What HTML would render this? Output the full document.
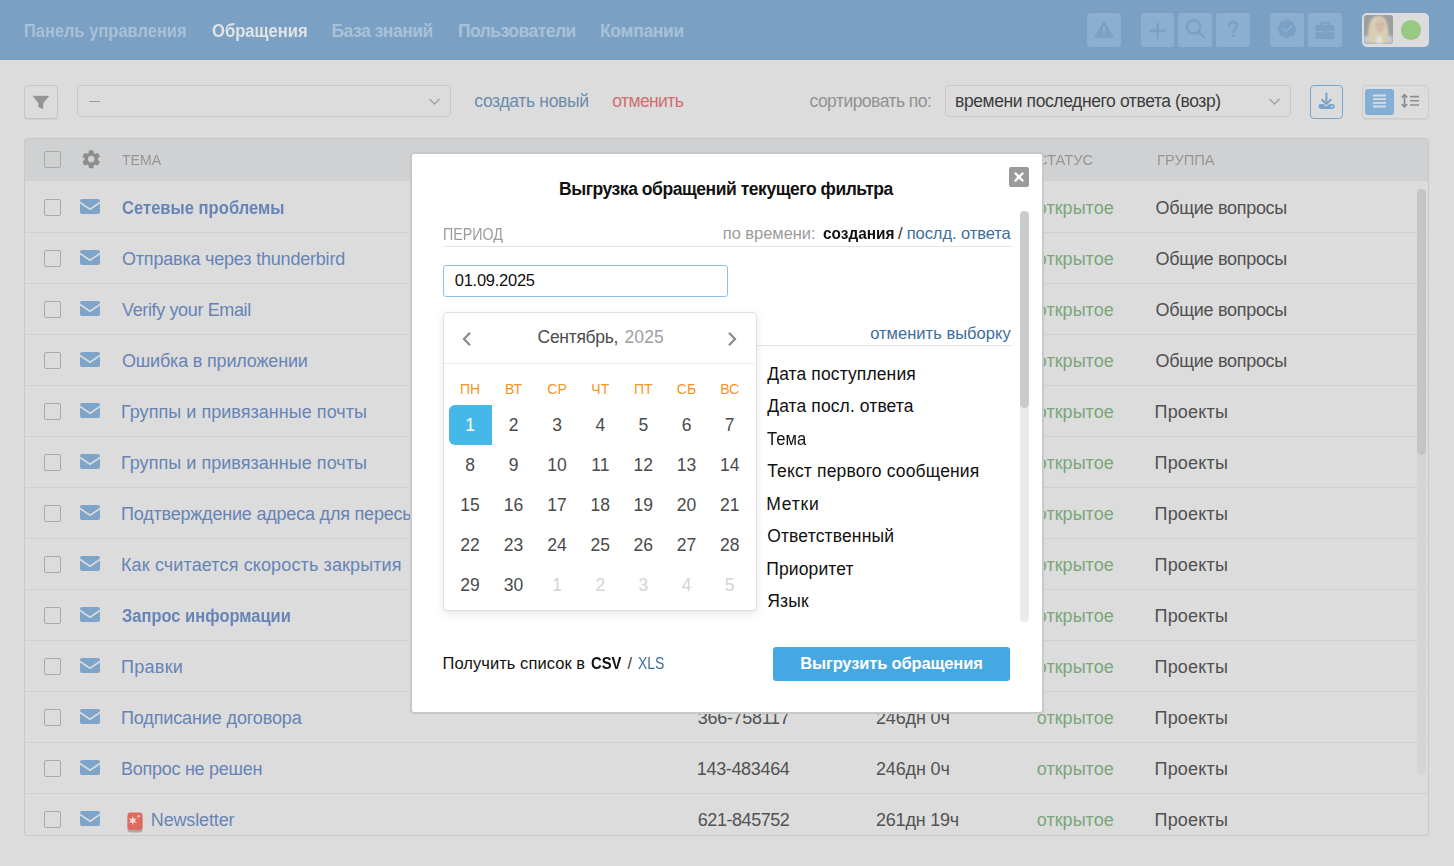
<!DOCTYPE html>
<html><head><meta charset="utf-8">
<style>
*{box-sizing:border-box;margin:0;padding:0}
html,body{width:1454px;height:866px;overflow:hidden;background:#dcdcdc;font-family:"Liberation Sans",sans-serif;position:relative}
.t{position:absolute;white-space:nowrap}
</style></head><body>
<div style="position:absolute;left:0;top:0;width:1454px;height:60px;background:#7aa1c4"></div>
<div class="t" style="left:24.06px;top:20.00px;transform:scaleX(0.9411);transform-origin:0 0;font-size:17.5px;line-height:22px;color:#a8c1d8;font-weight:700;">Панель управления</div>
<div class="t" style="left:211.50px;top:20.00px;transform:scaleX(0.9481);transform-origin:0 0;font-size:17.5px;line-height:22px;color:#e2e4e6;font-weight:700;">Обращения</div>
<div class="t" style="left:331.50px;top:20.00px;font-size:17.5px;line-height:22px;color:#a8c1d8;font-weight:700;letter-spacing:-0.492px;">База знаний</div>
<div class="t" style="left:458.00px;top:20.00px;font-size:17.5px;line-height:22px;color:#a8c1d8;font-weight:700;letter-spacing:-0.531px;">Пользователи</div>
<div class="t" style="left:600.00px;top:20.00px;font-size:17.5px;line-height:22px;color:#a8c1d8;font-weight:700;letter-spacing:-0.317px;">Компании</div>
<div style="position:absolute;top:13px;width:34px;height:34px;background:#8cafd0;border-radius:3px;left:1087px"><svg width="34" height="34" viewBox="0 0 34 34"><path d="M17 9.8 L25.2 23.8 L8.8 23.8 Z" fill="#7aa1c4" stroke="#7aa1c4" stroke-width="2.4" stroke-linejoin="round"/><rect x="16" y="13.2" width="2" height="5.8" rx="1" fill="#8cafd0"/><circle cx="17" cy="21.3" r="1.15" fill="#8cafd0"/></svg></div>
<div style="position:absolute;top:13px;width:34px;height:34px;background:#8cafd0;border-radius:3px;left:1141px;width:33px"><svg width="33" height="34" viewBox="0 0 33 34"><path d="M16.6 10.6 V25 M9.3 17.8 H24" stroke="#7aa1c4" stroke-width="2.4" stroke-linecap="round"/></svg></div>
<div style="position:absolute;top:13px;width:34px;height:34px;background:#8cafd0;border-radius:3px;left:1178px"><svg width="34" height="34" viewBox="0 0 34 34"><circle cx="15.6" cy="14" r="6.6" fill="none" stroke="#7aa1c4" stroke-width="2.6"/><path d="M20.5 19 L26 24.2" stroke="#7aa1c4" stroke-width="2.6" stroke-linecap="round"/></svg></div>
<div style="position:absolute;top:13px;width:34px;height:34px;background:#8cafd0;border-radius:3px;left:1216px"><svg width="34" height="34" viewBox="0 0 34 34"><path d="M12.9 12.8 C12.9 10.2 14.9 8.9 17 8.9 C19.2 8.9 21.1 10.3 21.1 12.5 C21.1 15.3 17.6 15.6 17.4 19" fill="none" stroke="#7aa1c4" stroke-width="2.6" stroke-linecap="round"/><circle cx="17.4" cy="23" r="1.5" fill="#7aa1c4"/></svg></div>
<div style="position:absolute;top:13px;width:34px;height:34px;background:#8cafd0;border-radius:3px;left:1270px"><svg width="34" height="34" viewBox="0 0 34 34"><path d="M26.45 15.80 L26.36 16.42 L26.10 17.01 L25.73 17.56 L25.33 18.06 L24.97 18.54 L24.71 19.03 L24.54 19.57 L24.46 20.16 L24.38 20.80 L24.26 21.45 L24.02 22.05 L23.65 22.55 L23.15 22.92 L22.55 23.16 L21.90 23.28 L21.26 23.36 L20.67 23.44 L20.13 23.61 L19.64 23.87 L19.16 24.23 L18.66 24.63 L18.11 25.00 L17.52 25.26 L16.90 25.35 L16.28 25.26 L15.69 25.00 L15.14 24.63 L14.64 24.23 L14.16 23.87 L13.67 23.61 L13.13 23.44 L12.54 23.36 L11.90 23.28 L11.25 23.16 L10.65 22.92 L10.15 22.55 L9.78 22.05 L9.54 21.45 L9.42 20.80 L9.34 20.16 L9.26 19.57 L9.09 19.03 L8.83 18.54 L8.47 18.06 L8.07 17.56 L7.70 17.01 L7.44 16.42 L7.35 15.80 L7.44 15.18 L7.70 14.59 L8.07 14.04 L8.47 13.54 L8.83 13.06 L9.09 12.57 L9.26 12.03 L9.34 11.44 L9.42 10.80 L9.54 10.15 L9.78 9.55 L10.15 9.05 L10.65 8.68 L11.25 8.44 L11.90 8.32 L12.54 8.24 L13.13 8.16 L13.67 7.99 L14.16 7.73 L14.64 7.37 L15.14 6.97 L15.69 6.60 L16.28 6.34 L16.90 6.25 L17.52 6.34 L18.11 6.60 L18.66 6.97 L19.16 7.37 L19.64 7.73 L20.13 7.99 L20.67 8.16 L21.26 8.24 L21.90 8.32 L22.55 8.44 L23.15 8.68 L23.65 9.05 L24.02 9.55 L24.26 10.15 L24.38 10.80 L24.46 11.44 L24.54 12.03 L24.71 12.57 L24.97 13.06 L25.33 13.54 L25.73 14.04 L26.10 14.59 L26.36 15.18 Z" fill="#7aa1c4"/><path d="M12.9 15.8 L16 18.7 L21.4 13.3" fill="none" stroke="#8cafd0" stroke-width="1.7" stroke-linecap="round" stroke-linejoin="round"/></svg></div>
<div style="position:absolute;top:13px;width:34px;height:34px;background:#8cafd0;border-radius:3px;left:1308px"><svg width="34" height="34" viewBox="0 0 34 34"><path d="M13.3 12 V10.6 Q13.3 9.7 14.2 9.7 H19.8 Q20.7 9.7 20.7 10.6 V12" fill="none" stroke="#7aa1c4" stroke-width="2"/><rect x="7.3" y="11.9" width="19.1" height="14.1" rx="1.8" fill="#7aa1c4"/><path d="M7.3 18.5 H26.4" stroke="#8cafd0" stroke-width="1.2"/><rect x="14.6" y="17.6" width="4.4" height="2.2" fill="#7aa1c4"/><rect x="14.9" y="19.6" width="3.8" height="1.2" fill="#84a9cb"/></svg></div>
<div style="position:absolute;top:13px;width:34px;height:34px;background:#8cafd0;border-radius:3px;left:1362px;width:67px;background:#dcdcdc;border-radius:5px">
 <div style="position:absolute;left:2.2px;top:2px;width:28.6px;height:28.6px;border-radius:3px;overflow:hidden;background:#9d9e9f">
 <svg width="28.6" height="28.6" viewBox="0 0 29 29"><defs><filter id="bl" x="-20%" y="-20%" width="140%" height="140%"><feGaussianBlur stdDeviation="0.9"/></filter></defs><g filter="url(#bl)">
 <path d="M0 22 Q6 19 14 20 Q23 19 29 22 V29 H0 Z" fill="#c4ccd4"/>
 <path d="M7 29 C3 22 4 14 6 8 C8 2 12 1 15 1 C19 1 22 3 23 8 C25 14 26 22 23 29 Z" fill="#d9cdb2"/>
 <ellipse cx="16" cy="10.5" rx="5" ry="7" fill="#d8bfb0"/>
 <path d="M12 29 L14 21 L17 21 L19 29 Z" fill="#e4e4e2"/>
 <path d="M10 6 Q16 1 22 6 Q19 4 16 4 Q12 4 10 9 Z" fill="#e2d6bc"/>
 <circle cx="14" cy="9.5" r="0.8" fill="#8f8278"/><circle cx="18.8" cy="9.5" r="0.8" fill="#8f8278"/><path d="M14.3 14.2 Q16.5 15.6 18.4 14.2" stroke="#c58f86" stroke-width="0.9" fill="none"/>
 </g></svg>
 </div>
 <div style="position:absolute;left:39px;top:7px;width:19.5px;height:19.5px;border-radius:50%;background:#98c884"></div>
</div>
<div style="position:absolute;border:1px solid #c6c6c6;border-radius:4px;left:24px;top:85px;width:34px;height:34px;box-shadow:0 1px 1px rgba(0,0,0,0.06)"><svg width="32" height="32" viewBox="0 0 32 32" style="position:absolute;left:0;top:0"><path d="M8.1 10 H23.9 L18 17.4 V22.9 L13.6 20.9 V17.4 Z" fill="#959595" stroke="#959595" stroke-width="0.4" stroke-linejoin="round"/></svg></div>
<div style="position:absolute;border:1px solid #c6c6c6;border-radius:4px;left:77px;top:85px;width:374px;height:32px;border-color:#c9c9c9"><div style="position:absolute;left:11px;top:14.5px;width:11px;height:1.5px;background:#9c9c9c"></div><svg width="14" height="10" viewBox="0 0 14 10" style="position:absolute;left:350px;top:11px"><path d="M1.5 2 L6.5 7 L11.5 2" fill="none" stroke="#a4a4a4" stroke-width="1.5"/></svg></div>
<div class="t" style="left:474.30px;top:90.00px;font-size:17.5px;line-height:22px;color:#6b8cab;letter-spacing:-0.329px;">создать новый</div>
<div class="t" style="left:612.30px;top:90.00px;font-size:17.5px;line-height:22px;color:#cf6f6f;letter-spacing:-0.597px;">отменить</div>
<div class="t" style="left:809.50px;top:90.00px;font-size:17.5px;line-height:22px;color:#929292;letter-spacing:-0.531px;">сортировать по:</div>
<div style="position:absolute;border:1px solid #c6c6c6;border-radius:4px;left:945px;top:85px;width:346px;height:32px;border-color:#c9c9c9"><svg width="14" height="10" viewBox="0 0 14 10" style="position:absolute;left:322px;top:11px"><path d="M1.5 2 L6.5 7 L11.5 2" fill="none" stroke="#a4a4a4" stroke-width="1.5"/></svg></div>
<div class="t" style="left:955.00px;top:90.00px;font-size:17.5px;line-height:22px;color:#3c3c3c;letter-spacing:-0.403px;">времени последнего ответа (возр)</div>
<div style="position:absolute;border:1px solid #c6c6c6;border-radius:4px;left:1310px;top:85px;width:33px;height:34px;border-color:#7aa7cd"><svg width="31" height="32" viewBox="0 0 31 32" style="position:absolute;left:0;top:0"><path d="M15.4 7.6 V17.2" stroke="#76a4cb" stroke-width="2" stroke-linecap="round"/><path d="M11.1 13.8 L15.4 18.1 L19.7 13.8" fill="none" stroke="#76a4cb" stroke-width="2" stroke-linecap="round" stroke-linejoin="round"/><path d="M9.9 18.1 H12.4 L15.4 20.6 L18.4 18.1 H21.4 Q23.8 18.1 23.8 20.5 Q23.8 22.9 21.4 22.9 H9.9 Q7.5 22.9 7.5 20.5 Q7.5 18.1 9.9 18.1 Z" fill="#76a4cb"/><circle cx="20.9" cy="20.5" r="0.9" fill="#dcdcdc"/></svg></div>
<div style="position:absolute;border:1px solid #c6c6c6;border-radius:4px;left:1362px;top:85px;width:67px;height:33.5px;border-color:#cdcdcd;box-shadow:0 1px 1px rgba(0,0,0,0.05)">
  <div style="position:absolute;left:2px;top:3px;width:29px;height:26px;background:#82afd3;border-radius:3px"></div>
  <svg width="29" height="26" viewBox="0 0 29 26" style="position:absolute;left:2px;top:3px"><path d="M8 6.5 H21 M8 10.2 H21 M8 13.8 H21 M8 17.5 H21" stroke="#dadde0" stroke-width="1.8"/></svg>
  <svg width="30" height="30" viewBox="0 0 30 30" style="position:absolute;left:33px;top:1px"><path d="M14 9.6 H23 M14 13.8 H23 M14 18 H23" stroke="#8e8e8e" stroke-width="1.6"/><path d="M8.5 7.8 V19.8 M6.3 10 L8.5 7.6 L10.7 10 M6.3 17.6 L8.5 20 L10.7 17.6" fill="none" stroke="#8e8e8e" stroke-width="1.7" stroke-linecap="round" stroke-linejoin="round"/></svg>
</div>
<div style="position:absolute;left:24px;top:138px;width:1405px;height:698px;border:1px solid #c9c9c9;border-radius:3px;overflow:hidden;background:#dcdcdc"><div style="position:absolute;left:0;top:0;width:1403px;height:42px;background:#d0d1d3"></div></div>
<div style="position:absolute;left:44px;width:17px;height:17px;border:1.5px solid #a9a9a9;border-radius:2px;top:151px"></div>
<svg width="22.4" height="22.4" viewBox="0 0 24 24" style="position:absolute;left:80.2px;top:147.7px"><path fill="#8d8d8d" d="M19.14 12.94c.04-.3.06-.61.06-.94 0-.32-.02-.64-.07-.94l2.03-1.58a.49.49 0 0 0 .12-.61l-1.92-3.32a.488.488 0 0 0-.59-.22l-2.39.96c-.5-.38-1.03-.7-1.62-.94l-.36-2.54a.484.484 0 0 0-.48-.41h-3.840c-.24 0-.43.17-.47.41l-.36 2.54c-.59.24-1.13.57-1.62.94l-2.39-.96c-.22-.08-.47 0-.59.22L2.74 8.87c-.12.21-.08.47.12.61l2.03 1.58c-.05.3-.09.63-.09.94s.02.64.07.94l-2.03 1.58a.49.49 0 0 0-.12.61l1.92 3.32c.12.22.37.29.59.22l2.39-.96c.5.38 1.03.7 1.62.94l.36 2.54c.05.24.24.41.48.41h3.84c.24 0 .44-.17.47-.41l.36-2.54c.59-.24 1.13-.56 1.62-.94l2.39.96c.22.08.47 0 .59-.22l1.92-3.32c.12-.22.07-.47-.12-.61l-2.01-1.58zM12 15.6c-1.98 0-3.6-1.620-3.6-3.6s1.62-3.6 3.6-3.6 3.6 1.62 3.6 3.6-1.62 3.6-3.6 3.6z"/></svg>
<div class="t" style="left:121.80px;top:150.00px;transform:scaleX(0.9058);transform-origin:0 0;font-size:15.5px;line-height:19px;color:#969696;">ТЕМА</div>
<div class="t" style="left:1037.00px;top:150.00px;transform:scaleX(0.9480);transform-origin:0 0;font-size:15.5px;line-height:19px;color:#969696;">СТАТУС</div>
<div class="t" style="left:1157.05px;top:150.00px;transform:scaleX(0.9468);transform-origin:0 0;font-size:15.5px;line-height:19px;color:#969696;">ГРУППА</div>
<div style="position:absolute;left:25px;top:232px;width:1403px;height:1px;background:#d0d0d0"></div>
<div style="position:absolute;left:44px;width:17px;height:17px;border:1.5px solid #a9a9a9;border-radius:2px;top:199px"></div>
<div style="position:absolute;left:80px;top:199px;width:20px;height:15px"><svg width="20" height="15" viewBox="0 0 20 15"><path d="M2 0 H18 Q20 0 20 2 V2.6 L10 9.3 L0 2.6 V2 Q0 0 2 0 Z" fill="#7ea5c9"/><path d="M0 4.6 L10 11.3 L20 4.6 V13 Q20 15 18 15 H2 Q0 15 0 13 Z" fill="#7ea5c9"/></svg></div>
<div class="t" style="left:122.00px;top:197.00px;transform:scaleX(0.9223);transform-origin:0 0;font-size:18px;line-height:22px;color:#6684b6;font-weight:700;">Сетевые проблемы</div>
<div class="t" style="left:1036.80px;top:197.00px;font-size:18px;line-height:22px;color:#7aa67a;letter-spacing:0.024px;">открытое</div>
<div class="t" style="left:1155.50px;top:197.00px;font-size:18px;line-height:22px;color:#505050;letter-spacing:-0.294px;">Общие вопросы</div>
<div style="position:absolute;left:25px;top:283px;width:1403px;height:1px;background:#d0d0d0"></div>
<div style="position:absolute;left:44px;width:17px;height:17px;border:1.5px solid #a9a9a9;border-radius:2px;top:250px"></div>
<div style="position:absolute;left:80px;top:250px;width:20px;height:15px"><svg width="20" height="15" viewBox="0 0 20 15"><path d="M2 0 H18 Q20 0 20 2 V2.6 L10 9.3 L0 2.6 V2 Q0 0 2 0 Z" fill="#7ea5c9"/><path d="M0 4.6 L10 11.3 L20 4.6 V13 Q20 15 18 15 H2 Q0 15 0 13 Z" fill="#7ea5c9"/></svg></div>
<div class="t" style="left:122.00px;top:248.00px;font-size:18px;line-height:22px;color:#6684b6;letter-spacing:-0.199px;">Отправка через thunderbird</div>
<div class="t" style="left:1036.80px;top:248.00px;font-size:18px;line-height:22px;color:#7aa67a;letter-spacing:0.024px;">открытое</div>
<div class="t" style="left:1155.50px;top:248.00px;font-size:18px;line-height:22px;color:#505050;letter-spacing:-0.294px;">Общие вопросы</div>
<div style="position:absolute;left:25px;top:334px;width:1403px;height:1px;background:#d0d0d0"></div>
<div style="position:absolute;left:44px;width:17px;height:17px;border:1.5px solid #a9a9a9;border-radius:2px;top:301px"></div>
<div style="position:absolute;left:80px;top:301px;width:20px;height:15px"><svg width="20" height="15" viewBox="0 0 20 15"><path d="M2 0 H18 Q20 0 20 2 V2.6 L10 9.3 L0 2.6 V2 Q0 0 2 0 Z" fill="#7ea5c9"/><path d="M0 4.6 L10 11.3 L20 4.6 V13 Q20 15 18 15 H2 Q0 15 0 13 Z" fill="#7ea5c9"/></svg></div>
<div class="t" style="left:122.00px;top:299.00px;font-size:18px;line-height:22px;color:#6684b6;letter-spacing:-0.365px;">Verify your Email</div>
<div class="t" style="left:1036.80px;top:299.00px;font-size:18px;line-height:22px;color:#7aa67a;letter-spacing:0.024px;">открытое</div>
<div class="t" style="left:1155.50px;top:299.00px;font-size:18px;line-height:22px;color:#505050;letter-spacing:-0.294px;">Общие вопросы</div>
<div style="position:absolute;left:25px;top:385px;width:1403px;height:1px;background:#d0d0d0"></div>
<div style="position:absolute;left:44px;width:17px;height:17px;border:1.5px solid #a9a9a9;border-radius:2px;top:352px"></div>
<div style="position:absolute;left:80px;top:352px;width:20px;height:15px"><svg width="20" height="15" viewBox="0 0 20 15"><path d="M2 0 H18 Q20 0 20 2 V2.6 L10 9.3 L0 2.6 V2 Q0 0 2 0 Z" fill="#7ea5c9"/><path d="M0 4.6 L10 11.3 L20 4.6 V13 Q20 15 18 15 H2 Q0 15 0 13 Z" fill="#7ea5c9"/></svg></div>
<div class="t" style="left:122.00px;top:350.00px;font-size:18px;line-height:22px;color:#6684b6;letter-spacing:-0.179px;">Ошибка в приложении</div>
<div class="t" style="left:1036.80px;top:350.00px;font-size:18px;line-height:22px;color:#7aa67a;letter-spacing:0.024px;">открытое</div>
<div class="t" style="left:1155.50px;top:350.00px;font-size:18px;line-height:22px;color:#505050;letter-spacing:-0.294px;">Общие вопросы</div>
<div style="position:absolute;left:25px;top:436px;width:1403px;height:1px;background:#d0d0d0"></div>
<div style="position:absolute;left:44px;width:17px;height:17px;border:1.5px solid #a9a9a9;border-radius:2px;top:403px"></div>
<div style="position:absolute;left:80px;top:403px;width:20px;height:15px"><svg width="20" height="15" viewBox="0 0 20 15"><path d="M2 0 H18 Q20 0 20 2 V2.6 L10 9.3 L0 2.6 V2 Q0 0 2 0 Z" fill="#7ea5c9"/><path d="M0 4.6 L10 11.3 L20 4.6 V13 Q20 15 18 15 H2 Q0 15 0 13 Z" fill="#7ea5c9"/></svg></div>
<div class="t" style="left:121.00px;top:401.00px;font-size:18px;line-height:22px;color:#6684b6;letter-spacing:0.039px;">Группы и привязанные почты</div>
<div class="t" style="left:1036.80px;top:401.00px;font-size:18px;line-height:22px;color:#7aa67a;letter-spacing:0.024px;">открытое</div>
<div class="t" style="left:1154.50px;top:401.00px;font-size:18px;line-height:22px;color:#505050;letter-spacing:0.201px;">Проекты</div>
<div style="position:absolute;left:25px;top:487px;width:1403px;height:1px;background:#d0d0d0"></div>
<div style="position:absolute;left:44px;width:17px;height:17px;border:1.5px solid #a9a9a9;border-radius:2px;top:454px"></div>
<div style="position:absolute;left:80px;top:454px;width:20px;height:15px"><svg width="20" height="15" viewBox="0 0 20 15"><path d="M2 0 H18 Q20 0 20 2 V2.6 L10 9.3 L0 2.6 V2 Q0 0 2 0 Z" fill="#7ea5c9"/><path d="M0 4.6 L10 11.3 L20 4.6 V13 Q20 15 18 15 H2 Q0 15 0 13 Z" fill="#7ea5c9"/></svg></div>
<div class="t" style="left:121.00px;top:452.00px;font-size:18px;line-height:22px;color:#6684b6;letter-spacing:0.039px;">Группы и привязанные почты</div>
<div class="t" style="left:1036.80px;top:452.00px;font-size:18px;line-height:22px;color:#7aa67a;letter-spacing:0.024px;">открытое</div>
<div class="t" style="left:1154.50px;top:452.00px;font-size:18px;line-height:22px;color:#505050;letter-spacing:0.201px;">Проекты</div>
<div style="position:absolute;left:25px;top:538px;width:1403px;height:1px;background:#d0d0d0"></div>
<div style="position:absolute;left:44px;width:17px;height:17px;border:1.5px solid #a9a9a9;border-radius:2px;top:505px"></div>
<div style="position:absolute;left:80px;top:505px;width:20px;height:15px"><svg width="20" height="15" viewBox="0 0 20 15"><path d="M2 0 H18 Q20 0 20 2 V2.6 L10 9.3 L0 2.6 V2 Q0 0 2 0 Z" fill="#7ea5c9"/><path d="M0 4.6 L10 11.3 L20 4.6 V13 Q20 15 18 15 H2 Q0 15 0 13 Z" fill="#7ea5c9"/></svg></div>
<div class="t" style="left:121.00px;top:503.00px;font-size:18px;line-height:22px;color:#6684b6;letter-spacing:-0.200px;">Подтверждение адреса для пересылки</div>
<div class="t" style="left:1036.80px;top:503.00px;font-size:18px;line-height:22px;color:#7aa67a;letter-spacing:0.024px;">открытое</div>
<div class="t" style="left:1154.50px;top:503.00px;font-size:18px;line-height:22px;color:#505050;letter-spacing:0.201px;">Проекты</div>
<div style="position:absolute;left:25px;top:589px;width:1403px;height:1px;background:#d0d0d0"></div>
<div style="position:absolute;left:44px;width:17px;height:17px;border:1.5px solid #a9a9a9;border-radius:2px;top:556px"></div>
<div style="position:absolute;left:80px;top:556px;width:20px;height:15px"><svg width="20" height="15" viewBox="0 0 20 15"><path d="M2 0 H18 Q20 0 20 2 V2.6 L10 9.3 L0 2.6 V2 Q0 0 2 0 Z" fill="#7ea5c9"/><path d="M0 4.6 L10 11.3 L20 4.6 V13 Q20 15 18 15 H2 Q0 15 0 13 Z" fill="#7ea5c9"/></svg></div>
<div class="t" style="left:121.00px;top:554.00px;font-size:18px;line-height:22px;color:#6684b6;letter-spacing:0.127px;">Как считается скорость закрытия</div>
<div class="t" style="left:1036.80px;top:554.00px;font-size:18px;line-height:22px;color:#7aa67a;letter-spacing:0.024px;">открытое</div>
<div class="t" style="left:1154.50px;top:554.00px;font-size:18px;line-height:22px;color:#505050;letter-spacing:0.201px;">Проекты</div>
<div style="position:absolute;left:25px;top:640px;width:1403px;height:1px;background:#d0d0d0"></div>
<div style="position:absolute;left:44px;width:17px;height:17px;border:1.5px solid #a9a9a9;border-radius:2px;top:607px"></div>
<div style="position:absolute;left:80px;top:607px;width:20px;height:15px"><svg width="20" height="15" viewBox="0 0 20 15"><path d="M2 0 H18 Q20 0 20 2 V2.6 L10 9.3 L0 2.6 V2 Q0 0 2 0 Z" fill="#7ea5c9"/><path d="M0 4.6 L10 11.3 L20 4.6 V13 Q20 15 18 15 H2 Q0 15 0 13 Z" fill="#7ea5c9"/></svg></div>
<div class="t" style="left:122.00px;top:605.00px;transform:scaleX(0.9158);transform-origin:0 0;font-size:18px;line-height:22px;color:#6684b6;font-weight:700;">Запрос информации</div>
<div class="t" style="left:1036.80px;top:605.00px;font-size:18px;line-height:22px;color:#7aa67a;letter-spacing:0.024px;">открытое</div>
<div class="t" style="left:1154.50px;top:605.00px;font-size:18px;line-height:22px;color:#505050;letter-spacing:0.201px;">Проекты</div>
<div style="position:absolute;left:25px;top:691px;width:1403px;height:1px;background:#d0d0d0"></div>
<div style="position:absolute;left:44px;width:17px;height:17px;border:1.5px solid #a9a9a9;border-radius:2px;top:658px"></div>
<div style="position:absolute;left:80px;top:658px;width:20px;height:15px"><svg width="20" height="15" viewBox="0 0 20 15"><path d="M2 0 H18 Q20 0 20 2 V2.6 L10 9.3 L0 2.6 V2 Q0 0 2 0 Z" fill="#7ea5c9"/><path d="M0 4.6 L10 11.3 L20 4.6 V13 Q20 15 18 15 H2 Q0 15 0 13 Z" fill="#7ea5c9"/></svg></div>
<div class="t" style="left:121.00px;top:656.00px;font-size:18px;line-height:22px;color:#6684b6;letter-spacing:0.281px;">Правки</div>
<div class="t" style="left:1036.80px;top:656.00px;font-size:18px;line-height:22px;color:#7aa67a;letter-spacing:0.024px;">открытое</div>
<div class="t" style="left:1154.50px;top:656.00px;font-size:18px;line-height:22px;color:#505050;letter-spacing:0.201px;">Проекты</div>
<div style="position:absolute;left:25px;top:742px;width:1403px;height:1px;background:#d0d0d0"></div>
<div style="position:absolute;left:44px;width:17px;height:17px;border:1.5px solid #a9a9a9;border-radius:2px;top:709px"></div>
<div style="position:absolute;left:80px;top:709px;width:20px;height:15px"><svg width="20" height="15" viewBox="0 0 20 15"><path d="M2 0 H18 Q20 0 20 2 V2.6 L10 9.3 L0 2.6 V2 Q0 0 2 0 Z" fill="#7ea5c9"/><path d="M0 4.6 L10 11.3 L20 4.6 V13 Q20 15 18 15 H2 Q0 15 0 13 Z" fill="#7ea5c9"/></svg></div>
<div class="t" style="left:121.00px;top:707.00px;font-size:18px;line-height:22px;color:#6684b6;letter-spacing:-0.125px;">Подписание договора</div>
<div class="t" style="left:1036.80px;top:707.00px;font-size:18px;line-height:22px;color:#7aa67a;letter-spacing:0.024px;">открытое</div>
<div class="t" style="left:1154.50px;top:707.00px;font-size:18px;line-height:22px;color:#505050;letter-spacing:0.201px;">Проекты</div>
<div class="t" style="left:697.80px;top:707.00px;font-size:18px;line-height:22px;color:#525252;letter-spacing:-0.305px;">366-758117</div>
<div class="t" style="left:876.00px;top:707.00px;font-size:18px;line-height:22px;color:#525252;letter-spacing:-0.155px;">246дн 0ч</div>
<div style="position:absolute;left:25px;top:793px;width:1403px;height:1px;background:#d0d0d0"></div>
<div style="position:absolute;left:44px;width:17px;height:17px;border:1.5px solid #a9a9a9;border-radius:2px;top:760px"></div>
<div style="position:absolute;left:80px;top:760px;width:20px;height:15px"><svg width="20" height="15" viewBox="0 0 20 15"><path d="M2 0 H18 Q20 0 20 2 V2.6 L10 9.3 L0 2.6 V2 Q0 0 2 0 Z" fill="#7ea5c9"/><path d="M0 4.6 L10 11.3 L20 4.6 V13 Q20 15 18 15 H2 Q0 15 0 13 Z" fill="#7ea5c9"/></svg></div>
<div class="t" style="left:121.00px;top:758.00px;font-size:18px;line-height:22px;color:#6684b6;letter-spacing:-0.265px;">Вопрос не решен</div>
<div class="t" style="left:1036.80px;top:758.00px;font-size:18px;line-height:22px;color:#7aa67a;letter-spacing:0.024px;">открытое</div>
<div class="t" style="left:1154.50px;top:758.00px;font-size:18px;line-height:22px;color:#505050;letter-spacing:0.201px;">Проекты</div>
<div class="t" style="left:696.80px;top:758.00px;font-size:18px;line-height:22px;color:#525252;letter-spacing:-0.342px;">143-483464</div>
<div class="t" style="left:876.00px;top:758.00px;font-size:18px;line-height:22px;color:#525252;letter-spacing:-0.155px;">246дн 0ч</div>
<div style="position:absolute;left:44px;width:17px;height:17px;border:1.5px solid #a9a9a9;border-radius:2px;top:811px"></div>
<div style="position:absolute;left:80px;top:811px;width:20px;height:15px"><svg width="20" height="15" viewBox="0 0 20 15"><path d="M2 0 H18 Q20 0 20 2 V2.6 L10 9.3 L0 2.6 V2 Q0 0 2 0 Z" fill="#7ea5c9"/><path d="M0 4.6 L10 11.3 L20 4.6 V13 Q20 15 18 15 H2 Q0 15 0 13 Z" fill="#7ea5c9"/></svg></div>
<svg width="16" height="21" viewBox="0 0 16 21" style="position:absolute;left:127px;top:812px"><rect x="0.5" y="3" width="15" height="17.5" rx="3" fill="#a9aaaa"/><rect x="0.5" y="0.5" width="15" height="17.5" rx="3" fill="#e0695d"/><path d="M5.80 3.80 L6.75 6.95 L9.96 6.20 L7.70 8.60 L9.96 11.00 L6.75 10.25 L5.80 13.40 L4.85 10.25 L1.64 11.00 L3.90 8.60 L1.64 6.20 L4.85 6.95 Z" fill="#f3dcd8"/><circle cx="11.6" cy="4.3" r="1.2" fill="#f0c8c2"/></svg>
<div class="t" style="left:150.80px;top:809.00px;font-size:18px;line-height:22px;color:#6684b6;letter-spacing:-0.148px;">Newsletter</div>
<div class="t" style="left:1036.80px;top:809.00px;font-size:18px;line-height:22px;color:#7aa67a;letter-spacing:0.024px;">открытое</div>
<div class="t" style="left:1154.50px;top:809.00px;font-size:18px;line-height:22px;color:#505050;letter-spacing:0.201px;">Проекты</div>
<div class="t" style="left:697.80px;top:809.00px;font-size:18px;line-height:22px;color:#525252;letter-spacing:-0.453px;">621-845752</div>
<div class="t" style="left:876.00px;top:809.00px;font-size:18px;line-height:22px;color:#525252;letter-spacing:-0.212px;">261дн 19ч</div>
<div style="position:absolute;left:1417px;top:189px;width:9px;height:586px;border-radius:4.5px;background:#d5d5d6"></div>
<div style="position:absolute;left:1417px;top:189px;width:9px;height:266px;border-radius:4.5px;background:#c3c4c6"></div>
<div style="position:absolute;left:410px;top:152px;width:634px;height:562px;background:#fff;border:2px solid #c8c8c8;border-radius:4px"></div>
<div style="position:absolute;left:1009px;top:167px;width:20px;height:20px;background:#9a9a9a;border-radius:2px"><svg width="20" height="20" viewBox="0 0 20 20"><path d="M5.8 5.8 L14.2 14.2 M14.2 5.8 L5.8 14.2" stroke="#fff" stroke-width="2.3"/></svg></div>
<div class="t" style="left:559.00px;top:178.00px;font-size:17.5px;line-height:22px;color:#111;font-weight:700;letter-spacing:-0.451px;">Выгрузка обращений текущего фильтра</div>
<div class="t" style="left:442.61px;top:224.80px;transform:scaleX(0.8911);transform-origin:0 0;font-size:16px;line-height:20px;color:#9b9b9b;">ПЕРИОД</div>
<div class="t" style="left:722.80px;top:223.00px;font-size:16.5px;line-height:21px;color:#9b9b9b;letter-spacing:-0.046px;">по времени:</div>
<div class="t" style="left:823.00px;top:223.00px;transform:scaleX(0.9342);transform-origin:0 0;font-size:16.5px;line-height:21px;color:#111;font-weight:700;">создания</div>
<div class="t" style="left:898.00px;top:223.00px;font-size:16.5px;line-height:21px;color:#333;">/</div>
<div class="t" style="left:906.70px;top:223.00px;font-size:16.5px;line-height:21px;color:#3c6e9c;letter-spacing:-0.070px;">послд. ответа</div>
<div style="position:absolute;left:443px;top:246px;width:570px;height:1px;background:#e6e6e6"></div>
<div style="position:absolute;left:443px;top:265px;width:285px;height:32px;border:1px solid #8fc0e8;border-radius:3px"></div>
<div class="t" style="left:454.80px;top:270.00px;font-size:16.5px;line-height:21px;color:#111;letter-spacing:-0.267px;">01.09.2025</div>
<div class="t" style="left:870.20px;top:323.00px;font-size:16.5px;line-height:21px;color:#3c6e9c;letter-spacing:0.027px;">отменить выборку</div>
<div style="position:absolute;left:443px;top:345px;width:570px;height:1px;background:#e6e6e6"></div>
<div class="t" style="left:767.20px;top:363.00px;font-size:17.5px;line-height:22px;color:#111;letter-spacing:0.114px;">Дата поступления</div>
<div class="t" style="left:767.20px;top:395.00px;font-size:17.5px;line-height:22px;color:#111;letter-spacing:0.104px;">Дата посл. ответа</div>
<div class="t" style="left:767.20px;top:428.00px;transform:scaleX(0.9501);transform-origin:0 0;font-size:17.5px;line-height:22px;color:#111;">Тема</div>
<div class="t" style="left:767.20px;top:460.00px;font-size:17.5px;line-height:22px;color:#111;letter-spacing:0.159px;">Текст первого сообщения</div>
<div class="t" style="left:766.20px;top:493.00px;font-size:17.5px;line-height:22px;color:#111;letter-spacing:0.776px;">Метки</div>
<div class="t" style="left:767.20px;top:525.00px;font-size:17.5px;line-height:22px;color:#111;letter-spacing:0.150px;">Ответственный</div>
<div class="t" style="left:766.20px;top:558.00px;font-size:17.5px;line-height:22px;color:#111;letter-spacing:0.138px;">Приоритет</div>
<div class="t" style="left:767.20px;top:590.00px;font-size:17.5px;line-height:22px;color:#111;letter-spacing:0.187px;">Язык</div>
<div style="position:absolute;left:1020px;top:211px;width:9px;height:411px;border-radius:4px;background:#e9eaec"></div>
<div style="position:absolute;left:1020px;top:211px;width:9px;height:197px;border-radius:4.5px;background:#c9cacc"></div>
<div class="t" style="left:442.50px;top:653.00px;font-size:16.5px;line-height:21px;color:#111;letter-spacing:0.055px;">Получить список в</div>
<div class="t" style="left:591.00px;top:653.00px;transform:scaleX(0.8991);transform-origin:0 0;font-size:16.5px;line-height:21px;color:#111;font-weight:700;">CSV</div>
<div class="t" style="left:627.50px;top:653.00px;font-size:16.5px;line-height:21px;color:#3a3a3a;">/</div>
<div class="t" style="left:637.80px;top:653.00px;transform:scaleX(0.8466);transform-origin:0 0;font-size:16.5px;line-height:21px;color:#3c6e9c;">XLS</div>
<div style="position:absolute;left:773px;top:647px;width:237px;height:34px;background:#46a8e2;border-radius:3px"></div>
<div class="t" style="left:800.20px;top:652.50px;font-size:16.5px;line-height:21px;color:#fff;font-weight:700;letter-spacing:-0.144px;">Выгрузить обращения</div>
<div style="position:absolute;left:443px;top:312px;width:314px;height:299px;background:#fff;border:1px solid #e0e0e0;border-radius:4px;box-shadow:0 3px 8px rgba(0,0,0,0.10)"></div>
<div style="position:absolute;left:444px;top:363px;width:311px;height:1px;background:#ececec"></div>
<svg width="12" height="16" viewBox="0 0 12 16" style="position:absolute;left:461px;top:331px"><path d="M9 1.8 L3 8 L9 14.2" fill="none" stroke="#8a8a8a" stroke-width="2.2"/></svg>
<svg width="12" height="16" viewBox="0 0 12 16" style="position:absolute;left:726px;top:331px"><path d="M3 1.8 L9 8 L3 14.2" fill="none" stroke="#8a8a8a" stroke-width="2.2"/></svg>
<div class="t" style="left:537.60px;top:326.00px;font-size:17.5px;line-height:22px;color:#4d4d4d;letter-spacing:-0.312px;">Сентябрь,</div>
<div class="t" style="left:624.60px;top:326.00px;font-size:17.5px;line-height:22px;color:#a0a0a0;letter-spacing:0.034px;">2025</div>
<div style="position:absolute;left:449px;top:405px;width:43px;height:40px;background:#45b7e8;border-radius:6px 0 0 6px"></div>
<div class="t" style="left:430.00px;top:380.00px;width:80px;text-align:center;font-size:14px;line-height:18px;color:#f7931e;">ПН</div>
<div class="t" style="left:473.50px;top:380.00px;width:80px;text-align:center;font-size:14px;line-height:18px;color:#f7931e;">ВТ</div>
<div class="t" style="left:517.00px;top:380.00px;width:80px;text-align:center;font-size:14px;line-height:18px;color:#f7931e;">СР</div>
<div class="t" style="left:560.30px;top:380.00px;width:80px;text-align:center;font-size:14px;line-height:18px;color:#f7931e;">ЧТ</div>
<div class="t" style="left:603.30px;top:380.00px;width:80px;text-align:center;font-size:14px;line-height:18px;color:#f7931e;">ПТ</div>
<div class="t" style="left:646.50px;top:380.00px;width:80px;text-align:center;font-size:14px;line-height:18px;color:#f7931e;">СБ</div>
<div class="t" style="left:689.70px;top:380.00px;width:80px;text-align:center;font-size:14px;line-height:18px;color:#f7931e;">ВС</div>
<div class="t" style="left:430.00px;top:414.00px;width:80px;text-align:center;font-size:17.5px;line-height:22px;color:#ffffff;">1</div>
<div class="t" style="left:473.50px;top:414.00px;width:80px;text-align:center;font-size:17.5px;line-height:22px;color:#4a4a4a;">2</div>
<div class="t" style="left:517.00px;top:414.00px;width:80px;text-align:center;font-size:17.5px;line-height:22px;color:#4a4a4a;">3</div>
<div class="t" style="left:560.30px;top:414.00px;width:80px;text-align:center;font-size:17.5px;line-height:22px;color:#4a4a4a;">4</div>
<div class="t" style="left:603.30px;top:414.00px;width:80px;text-align:center;font-size:17.5px;line-height:22px;color:#4a4a4a;">5</div>
<div class="t" style="left:646.50px;top:414.00px;width:80px;text-align:center;font-size:17.5px;line-height:22px;color:#4a4a4a;">6</div>
<div class="t" style="left:689.70px;top:414.00px;width:80px;text-align:center;font-size:17.5px;line-height:22px;color:#4a4a4a;">7</div>
<div class="t" style="left:430.00px;top:454.00px;width:80px;text-align:center;font-size:17.5px;line-height:22px;color:#4a4a4a;">8</div>
<div class="t" style="left:473.50px;top:454.00px;width:80px;text-align:center;font-size:17.5px;line-height:22px;color:#4a4a4a;">9</div>
<div class="t" style="left:517.00px;top:454.00px;width:80px;text-align:center;font-size:17.5px;line-height:22px;color:#4a4a4a;">10</div>
<div class="t" style="left:560.30px;top:454.00px;width:80px;text-align:center;font-size:17.5px;line-height:22px;color:#4a4a4a;">11</div>
<div class="t" style="left:603.30px;top:454.00px;width:80px;text-align:center;font-size:17.5px;line-height:22px;color:#4a4a4a;">12</div>
<div class="t" style="left:646.50px;top:454.00px;width:80px;text-align:center;font-size:17.5px;line-height:22px;color:#4a4a4a;">13</div>
<div class="t" style="left:689.70px;top:454.00px;width:80px;text-align:center;font-size:17.5px;line-height:22px;color:#4a4a4a;">14</div>
<div class="t" style="left:430.00px;top:494.00px;width:80px;text-align:center;font-size:17.5px;line-height:22px;color:#4a4a4a;">15</div>
<div class="t" style="left:473.50px;top:494.00px;width:80px;text-align:center;font-size:17.5px;line-height:22px;color:#4a4a4a;">16</div>
<div class="t" style="left:517.00px;top:494.00px;width:80px;text-align:center;font-size:17.5px;line-height:22px;color:#4a4a4a;">17</div>
<div class="t" style="left:560.30px;top:494.00px;width:80px;text-align:center;font-size:17.5px;line-height:22px;color:#4a4a4a;">18</div>
<div class="t" style="left:603.30px;top:494.00px;width:80px;text-align:center;font-size:17.5px;line-height:22px;color:#4a4a4a;">19</div>
<div class="t" style="left:646.50px;top:494.00px;width:80px;text-align:center;font-size:17.5px;line-height:22px;color:#4a4a4a;">20</div>
<div class="t" style="left:689.70px;top:494.00px;width:80px;text-align:center;font-size:17.5px;line-height:22px;color:#4a4a4a;">21</div>
<div class="t" style="left:430.00px;top:534.00px;width:80px;text-align:center;font-size:17.5px;line-height:22px;color:#4a4a4a;">22</div>
<div class="t" style="left:473.50px;top:534.00px;width:80px;text-align:center;font-size:17.5px;line-height:22px;color:#4a4a4a;">23</div>
<div class="t" style="left:517.00px;top:534.00px;width:80px;text-align:center;font-size:17.5px;line-height:22px;color:#4a4a4a;">24</div>
<div class="t" style="left:560.30px;top:534.00px;width:80px;text-align:center;font-size:17.5px;line-height:22px;color:#4a4a4a;">25</div>
<div class="t" style="left:603.30px;top:534.00px;width:80px;text-align:center;font-size:17.5px;line-height:22px;color:#4a4a4a;">26</div>
<div class="t" style="left:646.50px;top:534.00px;width:80px;text-align:center;font-size:17.5px;line-height:22px;color:#4a4a4a;">27</div>
<div class="t" style="left:689.70px;top:534.00px;width:80px;text-align:center;font-size:17.5px;line-height:22px;color:#4a4a4a;">28</div>
<div class="t" style="left:430.00px;top:574.00px;width:80px;text-align:center;font-size:17.5px;line-height:22px;color:#4a4a4a;">29</div>
<div class="t" style="left:473.50px;top:574.00px;width:80px;text-align:center;font-size:17.5px;line-height:22px;color:#4a4a4a;">30</div>
<div class="t" style="left:517.00px;top:574.00px;width:80px;text-align:center;font-size:17.5px;line-height:22px;color:#d4d4d4;">1</div>
<div class="t" style="left:560.30px;top:574.00px;width:80px;text-align:center;font-size:17.5px;line-height:22px;color:#d4d4d4;">2</div>
<div class="t" style="left:603.30px;top:574.00px;width:80px;text-align:center;font-size:17.5px;line-height:22px;color:#d4d4d4;">3</div>
<div class="t" style="left:646.50px;top:574.00px;width:80px;text-align:center;font-size:17.5px;line-height:22px;color:#d4d4d4;">4</div>
<div class="t" style="left:689.70px;top:574.00px;width:80px;text-align:center;font-size:17.5px;line-height:22px;color:#d4d4d4;">5</div>
</body></html>
